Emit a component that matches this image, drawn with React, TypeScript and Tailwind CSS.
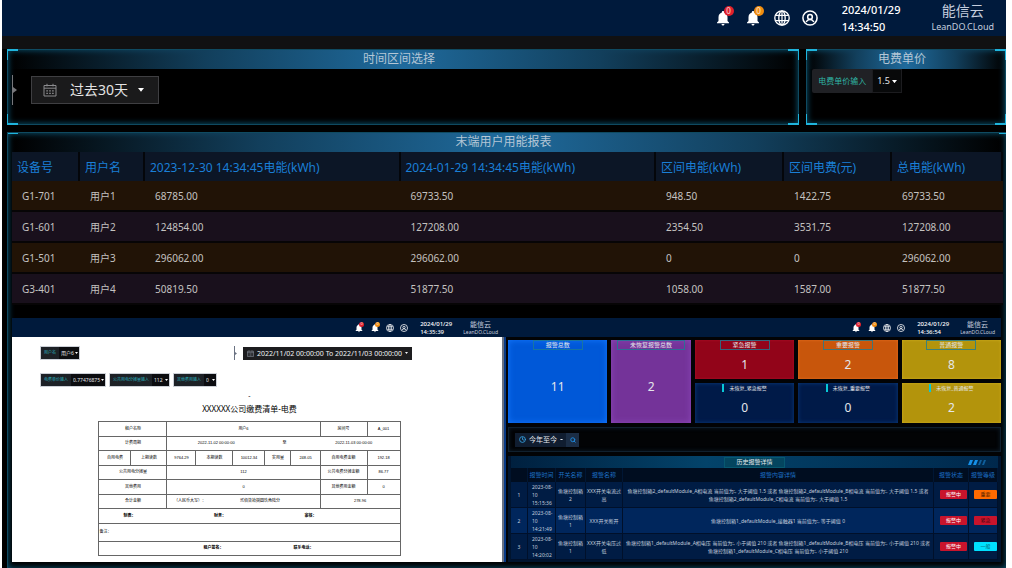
import { ReactNode } from 'react';
import { MdNotifications } from 'react-icons/md';
import { Clock, Search } from 'lucide-react';
import clsx from 'clsx';

interface HeaderProps {
  date: string;
  time: string;
  small?: boolean;
}

interface PanelProps {
  title: string;
  className?: string;
  open?: boolean; // no bottom corners, runs on to the page's end
  children?: ReactNode;
}

const usageRows = [
  ['G1-701', '用户1', '68785.00', '69733.50', '948.50', '1422.75', '69733.50'],
  ['G1-601', '用户2', '124854.00', '127208.00', '2354.50', '3531.75', '127208.00'],
  ['G1-501', '用户3', '296062.00', '296062.00', '0', '0', '296062.00'],
  ['G3-401', '用户4', '50819.50', '51877.50', '1058.00', '1587.00', '51877.50'],
];

const alarms = [
  {
    time: '2023-08-10 15:15:36',
    name: '鱼塘控制箱2',
    alarm: 'XXX开关电流过高',
    detail:
      '鱼塘控制箱2_defaultModule_A相电流 当前值为:, 大于阈值 1.5 或者 鱼塘控制箱2_defaultModule_B相电流 当前值为:, 大于阈值 1.5 或者 鱼塘控制箱2_defaultModule_C相电流 当前值为:, 大于阈值 1.5',
    level: '重要',
    levelClass: 'bg-[#ff6a00] text-[#5c2600]',
  },
  {
    time: '2023-08-10 14:21:49',
    name: '鱼塘控制箱1',
    alarm: 'XXX开关断开',
    detail: '鱼塘控制箱1_defaultModule_接触器1 当前值为:, 等于阈值 0',
    level: '紧急',
    levelClass: 'bg-[#c8142c] text-[#4c0610]',
  },
  {
    time: '2023-08-10 14:20:02',
    name: '鱼塘控制箱1',
    alarm: 'XXX开关电压过低',
    detail:
      '鱼塘控制箱1_defaultModule_A相电压 当前值为:, 小于阈值 210 或者 鱼塘控制箱1_defaultModule_B相电压 当前值为:, 小于阈值 210 或者 鱼塘控制箱1_defaultModule_C相电压 当前值为:, 小于阈值 210',
    level: '一般',
    levelClass: 'bg-[#00e0ff] text-[#06606e]',
  },
];

function GlobeIcon({ className }: { className?: string }) {
  return (
    <svg viewBox="0 0 24 24" fill="none" stroke="currentColor" strokeWidth="2" className={className}>
      <circle cx="12" cy="12" r="10.8" />
      <ellipse cx="12" cy="12" rx="4.8" ry="10.8" />
      <path d="M2.5 8h19M2.5 16h19M12 1.5v21" strokeWidth="1.8" />
    </svg>
  );
}

function UserIcon({ className }: { className?: string }) {
  return (
    <svg viewBox="0 0 24 24" fill="none" stroke="currentColor" strokeWidth="2.3" className={className}>
      <circle cx="12" cy="12" r="10.6" />
      <circle cx="12" cy="10.4" r="3.5" />
      <path d="M6.2 18c1.2-2.4 3.2-3.6 5.8-3.6s4.6 1.2 5.8 3.6" />
    </svg>
  );
}

function CalendarIcon({ className }: { className?: string }) {
  return (
    <svg viewBox="0 0 14 14" fill="none" stroke="currentColor" className={className}>
      <path d="M1 2.5h12v10.5H1zM1 5.2h12M4 .8v2.6M10 .8v2.6" />
      <path d="M3.3 7.8h1.6M6.2 7.8h1.6M9.1 7.8h1.6M3.3 10.4h1.6M6.2 10.4h1.6M9.1 10.4h1.6" strokeWidth="1.3" />
    </svg>
  );
}

function Caret({ className }: { className?: string }) {
  return (
    <svg viewBox="0 0 8 5" className={className}>
      <path d="M0 0h8L4 5z" fill="currentColor" />
    </svg>
  );
}

// Collapsed splitter handle
function Splitter({ small }: { small?: boolean }) {
  return (
    <div className={clsx('flex items-center', small ? 'h-[14px] text-gray-500' : 'h-[30px] text-[#77777b]')}>
      <div className="h-full w-px bg-current" />
      <svg viewBox="0 0 4 6" className={small ? 'w-0.5' : 'w-1'}>
        <path d="M0 0l4 3-4 3z" fill="currentColor" />
      </svg>
    </div>
  );
}

function Bell({ small, badgeClass }: { small?: boolean; badgeClass: string }) {
  return (
    <button aria-label="通知" className="relative block">
      <MdNotifications className={small ? 'size-[10px]' : 'size-[18px]'} />
      <span
        className={clsx(
          'absolute flex items-center justify-center rounded-full leading-none text-white/80',
          small ? '-top-px right-0 size-[5px] text-[4px]' : '-top-[3px] -right-[2px] size-[10px] text-[8px]',
          badgeClass,
        )}
      >
        0
      </span>
    </button>
  );
}

function Header({ date, time, small }: HeaderProps) {
  return (
    <header
      className={clsx(
        'flex items-center justify-end bg-[#001a3c] text-white',
        small ? 'h-[19px] pr-[6px]' : 'h-9 pr-3',
      )}
    >
      <div className={clsx('flex items-center', small ? 'mr-3 gap-[6px]' : 'mr-6 gap-3')}>
        <Bell small={small} badgeClass="bg-[#e0202c]" />
        <Bell small={small} badgeClass="bg-[#f08c10]" />
        <button aria-label="语言">
          <GlobeIcon className={small ? 'block size-2' : 'block size-4'} />
        </button>
        <button aria-label="账户">
          <UserIcon className={small ? 'block size-2' : 'block size-4'} />
        </button>
      </div>
      <div
        className={clsx(
          'font-medium',
          small ? 'mr-[11px] text-[6px] leading-[8px]' : 'mr-[31px] text-[11px] leading-[17px]',
        )}
      >
        <div>{date}</div>
        <div>{time}</div>
      </div>
      <div className="text-center text-[#c5cede]">
        <div className={small ? 'text-[7px] leading-[9px]' : 'text-sm leading-[18px]'}>能信云</div>
        <div className={small ? 'text-[5px] leading-[7px]' : 'text-[9px] leading-[14px]'}>LeanDO.CLoud</div>
      </div>
    </header>
  );
}

function Panel({ title, className, open, children }: PanelProps) {
  return (
    <section
      className={clsx(
        'relative border border-[#0f4a61] bg-black shadow-[inset_0_0_6px_#0b5c7c]',
        className,
      )}
    >
      <h2 className="h-[19px] bg-[linear-gradient(90deg,transparent,#123f5c_25%,#1f6a9c_50%,#123f5c_75%,transparent)] pr-[8px] text-center text-xs leading-[18px] text-[#b4c6d6]">
        {title}
      </h2>
      {children}
      <span className="absolute -top-px -left-px size-[11px] border-t-2 border-l border-[#1fb4dc]" />
      <span className={clsx('absolute -top-px size-[11px] border-t-2 border-[#1fb4dc]', open ? '-right-1' : '-right-px border-r')} />
      {!open && (
        <>
          <span className="absolute -bottom-px -left-px size-[11px] border-b-2 border-l border-[#1fb4dc]" />
          <span className="absolute -right-px -bottom-px size-[11px] border-r border-b-2 border-[#1fb4dc]" />
        </>
      )}
    </section>
  );
}

// Small labelled drop-down used on the bill page
function MiniSelect({ id, label, value, width }: { id: string; label: string; value: string; width: string }) {
  return (
    <div className="flex h-3 items-stretch bg-[#0c0d10] ring-1 ring-gray-400/50">
      <label htmlFor={id} className="bg-[#1d2126] px-[3px] text-[4px] leading-[12px] text-[#2bb3bf]">
        {label}
      </label>
      <div className="relative">
        <select id={id} className={clsx('block h-3 appearance-none pl-[2px] text-[5px] leading-[12px] text-gray-200', width)}>
          <option>{value}</option>
        </select>
        <Caret className="pointer-events-none absolute top-[5px] right-px w-[3px] text-white" />
      </div>
    </div>
  );
}

function Bill() {
  const cell = 'border border-[#666] p-0';
  return (
    <div className="flex-1 border-r-2 border-gray-500 bg-white pt-[9px] pl-[29px] text-black">
      <div className="flex items-center">
        <div className="w-[193px]">
          <div className="flex">
            <MiniSelect id="tenant" label="用户名" value="用户6" width="w-5" />
          </div>
        </div>
        <Splitter small />
        <button className="ml-[6px] flex h-[13px] items-center gap-[3px] bg-[#1d1d1f] px-1 text-[7px] leading-none whitespace-nowrap text-gray-100">
          <CalendarIcon className="size-[7px] text-gray-400" />
          2022/11/02 00:00:00 To 2022/11/03 00:00:00
          <Caret className="w-[3px]" />
        </button>
      </div>
      <div className="mt-[14px] flex gap-[5px]">
        <MiniSelect id="unit" label="电费单价输入" value="0.77476875" width="w-[34px]" />
        <MiniSelect id="share" label="公共用电分摊量输入" value="112" width="w-[17px]" />
        <MiniSelect id="other" label="其他费用输入" value="0" width="w-3" />
      </div>

      <div className="pr-11">
        <div className="mt-[6px] text-center text-[7px] leading-[8px]">-</div>
        <h3 className="mt-1 mb-[7px] text-center text-[8px] leading-[10px]">XXXXXX公司缴费清单-电费</h3>

        <table className="mx-auto h-[135px] w-[301px] table-fixed text-center font-['Liberation_Sans','Noto_Sans_CJK_SC',sans-serif] text-[4px] leading-[6px]">
          <colgroup>
            <col className="w-8" />
            <col className="w-9" />
            <col className="w-[29px]" />
            <col className="w-[37px]" />
            <col className="w-8" />
            <col className="w-[26px]" />
            <col className="w-[29px]" />
            <col className="w-[47px]" />
            <col className="w-[33px]" />
          </colgroup>
          <tbody>
            <tr>
              <td colSpan={2} className={cell}>租户名称</td>
              <td colSpan={5} className={cell}>用户6</td>
              <td className={cell}>房间号</td>
              <td className={cell}>A_001</td>
            </tr>
            <tr>
              <td colSpan={2} className={cell}>计费周期</td>
              <td colSpan={3} className="p-0">2022-11-02 00:00:00</td>
              <td colSpan={2} className="p-0 pr-4">至</td>
              <td colSpan={2} className="border-r border-[#666] p-0 pr-3">2022-11-03 00:00:00</td>
            </tr>
            <tr>
              {['自用电费', '上期读数', '9764.29', '本期读数', '10012.34', '实用量', '248.05', '自用电费金额', '192.18'].map(t => (
                <td key={t} className={cell}>{t}</td>
              ))}
            </tr>
            <tr>
              <td colSpan={2} className={cell}>公共用电分摊量</td>
              <td colSpan={5} className={cell}>112</td>
              <td className={cell}>公共电费分摊金额</td>
              <td className={cell}>86.77</td>
            </tr>
            <tr>
              <td colSpan={2} className={cell}>其他费用</td>
              <td colSpan={5} className={cell}>0</td>
              <td className={cell}>其他费用金额</td>
              <td className={cell}>0</td>
            </tr>
            <tr>
              <td colSpan={2} className={cell}>合计金额</td>
              <td colSpan={5} className={cell}>
                <div className="flex">
                  <span className="w-[45px]">（人民币大写）：</span>
                  <span className="flex-1 pr-3">贰佰柒拾捌圆玖角陆分</span>
                </div>
              </td>
              <td colSpan={2} className={cell}>278.96</td>
            </tr>
            <tr className="font-bold">
              <td colSpan={9} className={cell}>
                <div className="grid grid-cols-[60px_121px_60px]">
                  <span>制表：</span>
                  <span>财务：</span>
                  <span>审核：</span>
                </div>
              </td>
            </tr>
            <tr className="h-[18px]">
              <td colSpan={9} className={clsx(cell, 'text-left')}>备注：</td>
            </tr>
            <tr className="font-bold">
              <td colSpan={9} className={cell}>
                <div className="flex justify-center gap-[70px] pl-[18px]">
                  <span>租户签名：</span>
                  <span>联系电话：</span>
                </div>
              </td>
            </tr>
          </tbody>
        </table>
      </div>
    </div>
  );
}

function StatCard({ title, value, className }: { title: string; value: string; className: string }) {
  return (
    <div className={clsx('flex flex-col items-center text-gray-200', className)}>
      <div className="h-[10px] min-w-[49px] border border-[#1d7c93]/80 px-3 text-center text-[6px] leading-[8px] whitespace-nowrap">
        {title}
      </div>
      <div className="flex flex-1 items-center text-xs leading-none">{value}</div>
    </div>
  );
}

function OpenCard({ title, value, className }: { title: string; value: string; className: string }) {
  return (
    <div className={clsx('flex flex-col items-center text-gray-200', className)}>
      <div className="mt-px flex h-2 border-l-2 border-[#08c8d8] pl-[5px] text-[5px] leading-[8px] whitespace-nowrap">
        {title}
      </div>
      <div className="flex flex-1 items-center text-xs leading-none">{value}</div>
    </div>
  );
}

function AlarmPage() {
  return (
    <div className="flex-1 border-l-2 border-[#083a86] bg-[#020305] pt-[3px] pl-[2px]">
      <div className="grid grid-cols-[5fr_4fr_5fr_5fr_5fr] grid-rows-[39px_40px] gap-1">
        <StatCard title="报警总数" value="11" className="row-span-2 bg-[#0058d8] shadow-[inset_0_0_6px_#1478ff]" />
        <StatCard title="未恢复报警总数" value="2" className="row-span-2 bg-[#743399] shadow-[inset_0_0_6px_#8d48bb]" />
        <StatCard title="紧急报警" value="1" className="bg-[#920419] shadow-[inset_0_0_3px_#b0102a]" />
        <StatCard title="重要报警" value="2" className="bg-[#c8560c] shadow-[inset_0_0_3px_#e87020]" />
        <StatCard title="普通报警" value="8" className="bg-[#b3940c] shadow-[inset_0_0_3px_#d0b020]" />
        <OpenCard title="未恢复_紧急报警" value="0" className="bg-[#001a48] shadow-[inset_0_0_4px_#0a3c80]" />
        <OpenCard title="未恢复_重要报警" value="0" className="bg-[#001a48] shadow-[inset_0_0_4px_#0a3c80]" />
        <OpenCard title="未恢复_普通报警" value="2" className="bg-[#b3940c] shadow-[inset_0_0_3px_#d0b020]" />
      </div>

      <div className="mt-1 flex h-[25px] items-center border border-[#10202e] pl-[6px] shadow-[inset_0_0_4px_#0c1c2a]">
        <button className="flex h-[14px] items-center gap-[3px] bg-[#101d30] pr-[3px] pl-1 text-[7px] leading-none text-gray-200">
          <Clock className="size-[7px] text-[#35a0e0]" strokeWidth={3} />
          <span>今年至今</span>
          <Caret className="w-[3px]" />
        </button>
        <button aria-label="搜索" className="flex h-[14px] w-[13px] items-center justify-center bg-[#1b2d45] text-[#1d84d4]">
          <Search className="size-[6px]" strokeWidth={4} />
        </button>
      </div>

      <div className="mt-1 bg-[#00142e] px-[3px] pb-[2px]">
        <div className="grid h-3 grid-cols-3 items-center bg-[linear-gradient(90deg,#00203f,#03436a_40%,#00284c)]">
          <div />
          <h3 className="mx-auto w-[61px] border border-[#075870] bg-[#04455f] text-center text-[6px] leading-[9px] text-gray-200">
            历史报警详情
          </h3>
          <svg viewBox="0 0 20 5" className="mr-[10px] h-[5px] w-5 justify-self-end">
            <path d="M2 0h3L3 5H0zM7 0h3L8 5H5z" fill="#1590e8" />
            <path d="M12 0h2l-2 5h-2zM16 0h2l-2 5h-2z" fill="#0f5f9c" />
          </svg>
        </div>
        <table className="w-full table-fixed border-separate border-spacing-0 text-center text-[5px] leading-[8px] text-[#c3cede]">
          <colgroup>
            <col className="w-[17px]" />
            <col className="w-7" />
            <col className="w-[30px]" />
            <col className="w-[37px]" />
            <col />
            <col className="w-[35px]" />
            <col className="w-[29px]" />
          </colgroup>
          <thead>
            <tr className="h-[14px] bg-[#000d20] text-[6px] whitespace-nowrap text-[#1c6fc4]">
              {['', '报警时间', '开关名称', '报警名称', '报警内容详情', '报警状态', '报警等级'].map((h, i) => (
                <th key={i} className="border-r border-[#001634] p-0 font-normal">{h}</th>
              ))}
            </tr>
          </thead>
          <tbody>
            {alarms.map((a, i) => (
              <tr key={a.time} className="h-[26px] odd:bg-[#001c44] even:bg-[#00265c] [&>td]:border-r [&>td]:border-b [&>td]:border-[#00102a]">
                <td className="p-0">{i + 1}</td>
                <td className="py-0 pr-0 pl-1 text-left">{a.time}</td>
                <td className="px-[2px] py-0">{a.name}</td>
                <td className="p-0">{a.alarm}</td>
                <td className="px-[2px] py-0">{a.detail}</td>
                <td className="py-0 pr-px pl-[6px]">
                  <div className="h-[9px] rounded-[1px] bg-[#c8142c] leading-[9px] text-white">报警中</div>
                </td>
                <td className="py-0 pr-0 pl-[5px]">
                  <div className={clsx('h-[9px] rounded-[1px] leading-[9px]', a.levelClass)}>{a.level}</div>
                </td>
              </tr>
            ))}
          </tbody>
        </table>
      </div>
    </div>
  );
}

export default function App() {
  return (
    <div className="min-h-screen bg-white pr-[6px] pl-[2px] font-['Noto_Sans','Noto_Sans_CJK_SC',sans-serif]">
      <div className="flex min-h-screen flex-col bg-black">
        <Header date="2024/01/29" time="14:34:50" />
        <div className="h-[13px] bg-[#111112]" />

        <main className="flex flex-1 flex-col pl-[5px]">
          <div className="flex gap-[7px]">
            <Panel title="时间区间选择" className="h-[76px] flex-1">
              <div className="flex items-center pt-[6px] pl-1">
                <Splitter />
                <button className="ml-[14px] flex h-7 w-32 items-center border border-[#3f3f42] bg-[#1a1a1b] pl-[11px] text-sm text-[#e4e4e4]">
                  <CalendarIcon className="mr-[13px] size-[14px] text-[#8a8a8d]" />
                  过去30天
                  <Caret className="ml-[10px] w-[6px] text-white" />
                </button>
              </div>
            </Panel>
            <Panel title="电费单价" className="w-1/5">
              <div className="flex pl-[5px]">
                <label htmlFor="price" className="h-6 rounded-l-xs bg-[#202125] px-[6px] text-[8px] leading-6 text-[#2fb5a4]">
                  电费单价输入
                </label>
                <div className="relative h-6 border border-[#1c1c1f] bg-[#08090a]">
                  <select id="price" className="block h-[22px] w-7 appearance-none pl-1 text-[9px] leading-[22px] text-gray-200">
                    <option>1.5</option>
                  </select>
                  <Caret className="pointer-events-none absolute top-[10px] right-1 w-[5px] text-white" />
                </div>
              </div>
            </Panel>
          </div>

          <Panel open title="末端用户用能报表" className="mt-[7px] flex-1 overflow-hidden border-r-0 border-b-0 pr-[3px] pb-[6px] pl-1">
            <table className="w-full table-fixed border-separate border-spacing-0 text-left">
              <colgroup>
                <col className="w-[68px]" />
                <col className="w-[65px]" />
                <col />
                <col />
                <col className="w-32" />
                <col className="w-[108px]" />
                <col className="w-[111px]" />
              </colgroup>
              <thead>
                <tr className="h-[29px] bg-[#0c1626] text-xs text-[#1a7fd6]">
                  {[
                    '设备号',
                    '用户名',
                    '2023-12-30 14:34:45电能(kWh)',
                    '2024-01-29 14:34:45电能(kWh)',
                    '区间电能(kWh)',
                    '区间电费(元)',
                    '总电能(kWh)',
                  ].map(h => (
                    <th key={h} className="border-r-2 border-[#04060a] pt-[2px] pl-[5px] font-normal whitespace-nowrap">{h}</th>
                  ))}
                </tr>
              </thead>
              <tbody>
                {usageRows.map(row => (
                  <tr key={row[0]} className="h-[31px] text-[10px] text-[#c4c2c0] odd:bg-[#211306] even:bg-[#19101c]">
                    {row.map((v, i) => (
                      <td key={i} className="border-b-2 border-[#070506] pt-[2px] pl-[10px]">{v}</td>
                    ))}
                  </tr>
                ))}
              </tbody>
            </table>

            <div className="mt-[13px] mr-[2px] flex">
              <div className="flex min-w-0 flex-[492] flex-col">
                <Header small date="2024/01/29" time="14:35:39" />
                <Bill />
              </div>
              <div className="flex min-w-0 flex-[497] flex-col">
                <Header small date="2024/01/29" time="14:36:54" />
                <AlarmPage />
              </div>
            </div>
          </Panel>
        </main>
      </div>
    </div>
  );
}
